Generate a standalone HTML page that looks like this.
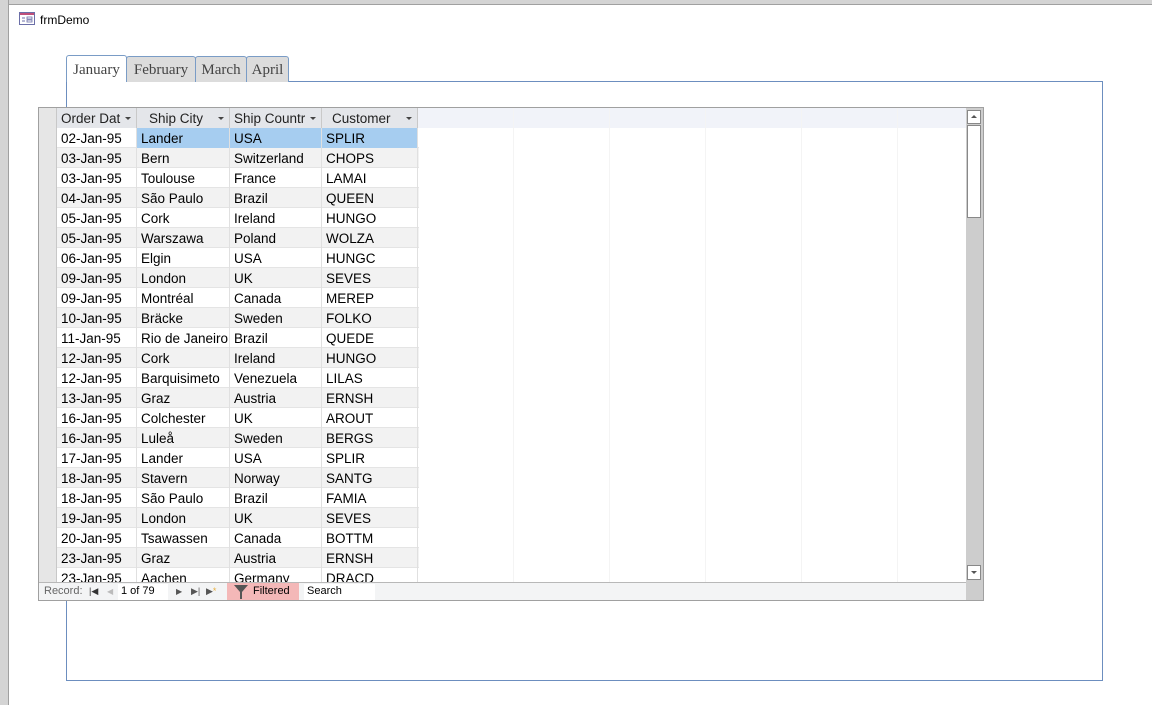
<!DOCTYPE html>
<html><head><meta charset="utf-8"><style>
*{margin:0;padding:0;box-sizing:border-box}
body{width:1152px;height:705px;background:#fff;position:relative;overflow:hidden;font-family:"Liberation Sans",sans-serif;font-size:13.5px;color:#000}
.a{position:absolute}
.frame-top{left:0;top:0;width:1152px;height:5px;background:#d4d4d4;border-bottom:1px solid #a0a0a0}
.frame-left{left:0;top:0;width:9px;height:705px;background:#d4d4d4;border-right:1px solid #a0a0a0}
.title{left:40px;top:13px;font-size:12px}
.tab{top:56px;height:26px;font-family:"Liberation Serif",serif;font-size:15px;color:#444;border:1px solid #7a9cc6;border-bottom:none;border-radius:3px 3px 0 0;background:#dcdcdc;text-align:center;line-height:27px}
.box{left:66px;top:81px;width:1037px;height:600px;border:1px solid #6c8ebf}
.grid{left:38px;top:107px;width:946px;height:494px;border:1px solid #a0a0a0;background:#fff;overflow:hidden}
.row{position:absolute;left:0;height:20px;width:380px;border-bottom:1px solid #e4e4e4}
.c{position:absolute;top:0;height:20px;line-height:21px;padding-left:4px;white-space:nowrap;overflow:hidden;border-right:1px solid #e0e0e0}
.hdr{position:absolute;left:0;top:0;width:927px;height:20px;background:#f1f3f9}
.hc{position:absolute;top:0;height:20px;line-height:21px;background:#e4e6ea;border-right:1px solid #c9c9c9;color:#222}
.arr{position:absolute;right:5px;top:9px;border-left:3px solid transparent;border-right:3px solid transparent;border-top:3px solid #444}
.sel{position:absolute;left:0;width:18px;background:#e6e6e6;border-right:1px solid #c8c8c8}
.vl{position:absolute;top:0;width:1px;height:474px;background:#f4f4f4}
</style></head><body>
<div class="a frame-top"></div>
<div class="a frame-left"></div>
<svg class="a" style="left:19px;top:12px" width="16" height="14"><rect x="0.5" y="0.5" width="15" height="12" fill="#fff" stroke="#6b6fa8"/><rect x="1" y="1" width="14" height="2" fill="#c0507a"/><line x1="3" y1="6" x2="6" y2="6" stroke="#6b6fa8"/><line x1="3" y1="9" x2="6" y2="9" stroke="#6b6fa8"/><rect x="8" y="5" width="5" height="2" fill="none" stroke="#6b6fa8" stroke-width=".8"/><rect x="8" y="8" width="5" height="2" fill="none" stroke="#6b6fa8" stroke-width=".8"/></svg>
<div class="a title">frmDemo</div>

<div class="a box"></div>
<div class="a tab" style="left:66px;top:55px;height:27px;width:61px;background:#fff;z-index:2;line-height:28px">January</div>
<div class="a tab" style="left:126px;width:70px">February</div>
<div class="a tab" style="left:195px;width:52px">March</div>
<div class="a tab" style="left:246px;width:43px">April</div>

<div class="a grid">
<div class="hdr"></div>
<div class="vl" style="left:474px"></div>
<div class="vl" style="left:570px"></div><div class="vl" style="left:666px"></div><div class="vl" style="left:762px"></div><div class="vl" style="left:858px"></div>
<div class="sel" style="top:0;height:474px"></div>
<div class="hc" style="left:18px;width:80px;padding-left:4px">Order Dat<span class="arr"></span></div>
<div class="hc" style="left:98px;width:93px;padding-left:12px">Ship City<span class="arr"></span></div>
<div class="hc" style="left:191px;width:92px;padding-left:4px">Ship Countr<span class="arr"></span></div>
<div class="hc" style="left:283px;width:96px;padding-left:10px">Customer<span class="arr"></span></div>
<div id="rows"></div>
<div style="position:absolute;left:927px;top:0;width:17px;height:492px;background:#cdcdcd"></div>
<div style="position:absolute;left:928px;top:2px;width:14px;height:14px;background:#fff;border:1px solid #888"><div style="position:absolute;left:3px;top:4px;border-left:3px solid transparent;border-right:3px solid transparent;border-bottom:3px solid #555"></div></div>
<div style="position:absolute;left:928px;top:17px;width:14px;height:93px;background:#fff;border:1px solid #888"></div>
<div style="position:absolute;left:928px;top:457px;width:14px;height:15px;background:#fff;border:1px solid #888"><div style="position:absolute;left:3px;top:5px;border-left:3px solid transparent;border-right:3px solid transparent;border-top:3px solid #555"></div></div>
<div style="position:absolute;left:0;top:474px;width:927px;height:18px;background:#f3f4f5;border-top:1px solid #b8b8b8;font-size:11px;color:#666;line-height:17px">
<span style="position:absolute;left:5px">Record:</span>
<span style="position:absolute;left:50px;color:#333;font-size:9px">|◀</span>
<span style="position:absolute;left:68px;color:#bbb;font-size:8px">◀</span>
<span style="position:absolute;left:79px;top:1px;width:50px;height:16px;background:#fff;line-height:15px;padding-left:3px;color:#000;font-size:11px">1 of 79</span>
<span style="position:absolute;left:137px;color:#555;font-size:8px">▶</span>
<span style="position:absolute;left:152px;color:#555;font-size:9px">▶|</span>
<span style="position:absolute;left:167px;color:#555;font-size:9px">▶<span style="color:#e8b040">*</span></span>
<span style="position:absolute;left:188px;top:0;width:72px;height:17px;background:#f4b8b8;color:#000;padding-left:26px;font-size:11px">Filtered</span>
<svg style="position:absolute;left:195px;top:2px" width="14" height="14"><path d="M0 0H14L8 7V14H6V7Z" fill="#555"/></svg>
<span style="position:absolute;left:265px;top:1px;width:71px;height:16px;background:#fff;color:#000;padding-left:3px;line-height:15px;font-size:11px">Search</span>
</div>
</div>
<script>
var d=[["02-Jan-95","Lander","USA","SPLIR"],["03-Jan-95","Bern","Switzerland","CHOPS"],["03-Jan-95","Toulouse","France","LAMAI"],["04-Jan-95","São Paulo","Brazil","QUEEN"],["05-Jan-95","Cork","Ireland","HUNGO"],["05-Jan-95","Warszawa","Poland","WOLZA"],["06-Jan-95","Elgin","USA","HUNGC"],["09-Jan-95","London","UK","SEVES"],["09-Jan-95","Montréal","Canada","MEREP"],["10-Jan-95","Bräcke","Sweden","FOLKO"],["11-Jan-95","Rio de Janeiro","Brazil","QUEDE"],["12-Jan-95","Cork","Ireland","HUNGO"],["12-Jan-95","Barquisimeto","Venezuela","LILAS"],["13-Jan-95","Graz","Austria","ERNSH"],["16-Jan-95","Colchester","UK","AROUT"],["16-Jan-95","Luleå","Sweden","BERGS"],["17-Jan-95","Lander","USA","SPLIR"],["18-Jan-95","Stavern","Norway","SANTG"],["18-Jan-95","São Paulo","Brazil","FAMIA"],["19-Jan-95","London","UK","SEVES"],["20-Jan-95","Tsawassen","Canada","BOTTM"],["23-Jan-95","Graz","Austria","ERNSH"],["23-Jan-95","Aachen","Germany","DRACD"]];
var L=[18,98,191,283],W=[80,93,92,96],h="";
d.forEach(function(r,i){var bg=i%2?"#f2f2f2":"#fff";h+='<div class="row" style="top:'+(20+i*20)+'px;background:'+bg+'"><div class="sel" style="top:0;height:20px"></div>';r.forEach(function(t,j){var b=(i==0&&j>0)?"background:#a6cdf0;":"";h+='<div class="c" style="left:'+L[j]+'px;width:'+W[j]+'px;'+b+'">'+t+'</div>'});h+='</div>'});
document.getElementById("rows").innerHTML=h;
</script>
</body></html>
